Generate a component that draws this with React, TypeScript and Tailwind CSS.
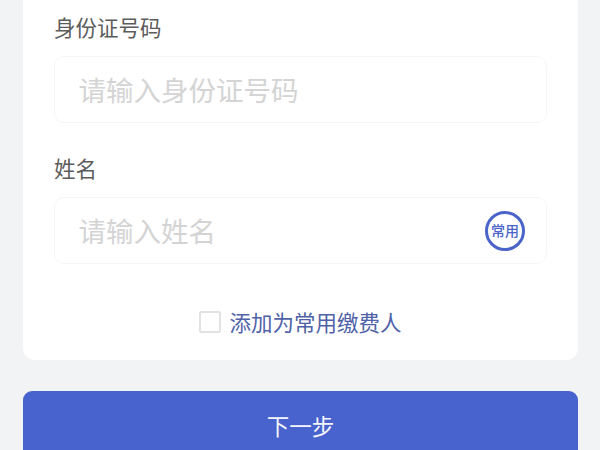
import React from 'react';

const FONT = "font-['Noto_Sans_CJK_SC','Noto_Sans',sans-serif]";

const Field = ({ label, placeholder, children }: { label: string; placeholder: string; children?: React.ReactNode }) => (
  <div className="flex flex-col">
    <div className="h-[56px] pt-[12px] text-[21.5px] leading-[30px] text-[#5c5c5c]">{label}</div>
    <div className="flex h-[67px] items-center justify-between rounded-[10px] border border-[#f6f6f7] pl-[23.5px] pr-[21px]">
      <span className="-mt-[2px] text-[27.5px] leading-[36px] text-[#d4d4d4]">{placeholder}</span>
      {children}
    </div>
  </div>
);

const App: React.FC = () => {
  return (
    <div className={`flex h-[450px] w-[600px] flex-col overflow-hidden bg-[#f2f3f5] pl-[23px] pr-[22px] ${FONT}`}>
      <div className="h-[360px] shrink-0 rounded-b-[12px] bg-white px-[31px]">
        <Field label="身份证号码" placeholder="请输入身份证号码" />
        <div className="mt-[18px]">
          <Field label="姓名" placeholder="请输入姓名">
            <div className="flex h-[40px] w-[40px] items-center justify-center rounded-full border-[3px] border-[#4a64c9] text-[14px] font-medium text-[#4a64c9]">
              常用
            </div>
          </Field>
        </div>
        <div className="mt-[46px] flex items-center justify-center gap-[8px]">
          <div className="h-[22px] w-[22px] rounded-[2px] border-2 border-[#e2e2e2]" />
          <span className="text-[21.5px] leading-[24px] text-[#4f62a8]">添加为常用缴费人</span>
        </div>
      </div>
      <div className="mt-[31px] flex h-[68px] shrink-0 items-center justify-center rounded-t-[9px] bg-[#4863cd] text-[22.5px] leading-[30px] text-[#f4f6fc]">
        下一步
      </div>
    </div>
  );
};

export default App;
